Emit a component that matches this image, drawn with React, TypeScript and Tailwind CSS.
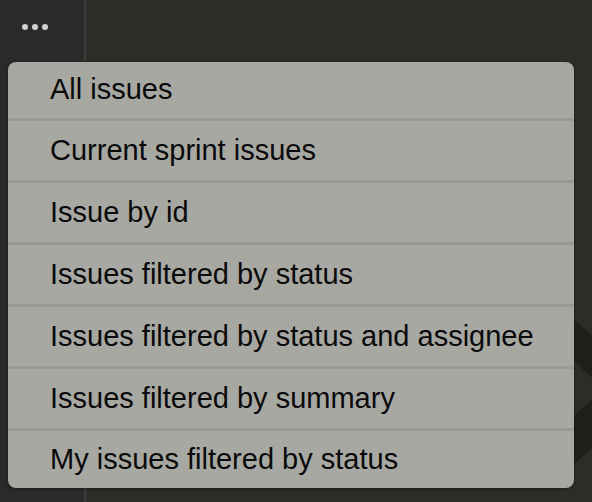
import React from 'react';

const items = [
  'All issues',
  'Current sprint issues',
  'Issue by id',
  'Issues filtered by status',
  'Issues filtered by status and assignee',
  'Issues filtered by summary',
  'My issues filtered by status',
];

const App: React.FC = () => {
  return (
    <div className="relative w-[592px] h-[502px] overflow-hidden flex font-['Liberation_Sans',Arial,sans-serif]">
      <div className="w-[86px] h-full bg-[#2a2a2a] border-r-2 border-[#3b3b3b] shrink-0">
        <div className="flex gap-[4px] pl-[22px] pt-[24px]">
          <span className="w-[6px] h-[6px] rounded-full bg-[#d2d2d2]" />
          <span className="w-[6px] h-[6px] rounded-full bg-[#d2d2d2]" />
          <span className="w-[6px] h-[6px] rounded-full bg-[#d2d2d2]" />
        </div>
      </div>
      <div className="relative flex-1 h-full bg-[#2d2c26]">
        {/* faint chevron in the background */}
        <svg className="absolute right-0 top-0" width="40" height="502" viewBox="552 0 40 502">
          <polygon points="560,308 592,335 592,378 560,348" fill="#1e1e1a" />
          <polygon points="560,428 592,400 592,448 560,477" fill="#1e1e1a" />
        </svg>
      </div>

      <div className="absolute left-[8px] top-[62px] w-[566px] h-[426px] rounded-[8px] bg-[#a8a8a3] overflow-hidden flex flex-col shadow-[0_1px_3px_rgba(0,0,0,0.35)]">
        {items.map((item, i) => (
          <div
            key={item}
            className={`flex items-center pl-[42px] pb-[1px] text-[29px] leading-none text-[#0a0a0a] ${
              i === 0 ? 'h-[55px]' : i === items.length - 1 ? 'h-[56px]' : 'h-[58px]'
            } ${i < items.length - 1 ? 'border-b-[3px] border-[#9a9a95]' : ''} box-content`}
          >
            {item}
          </div>
        ))}
      </div>
    </div>
  );
};

export default App;
